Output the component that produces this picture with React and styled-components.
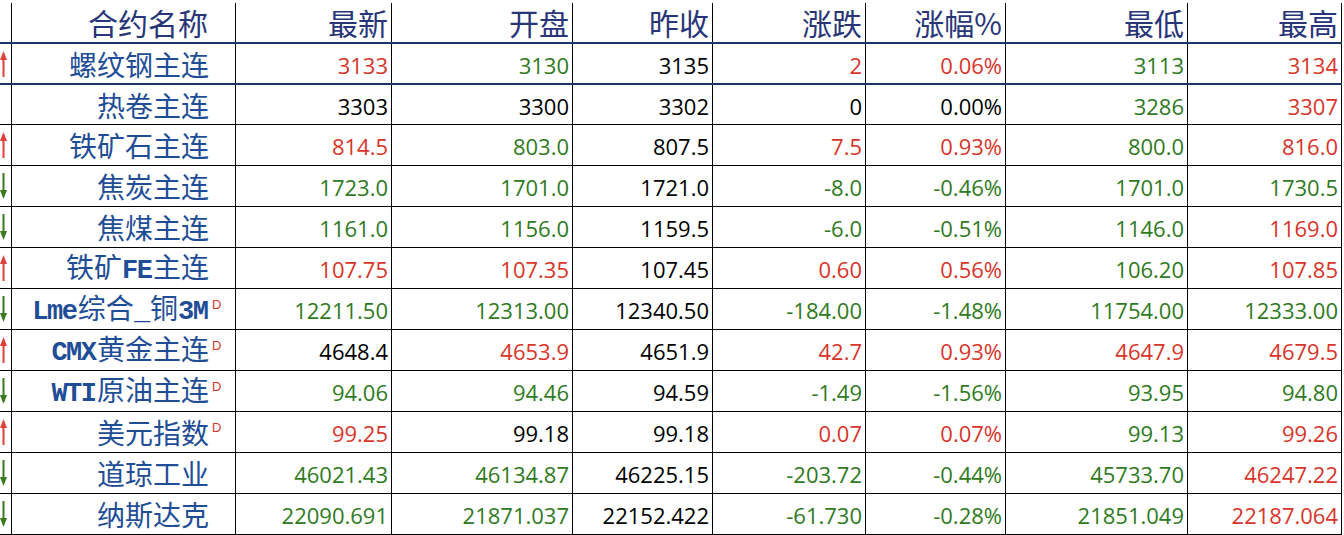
import styled, { createGlobalStyle } from "styled-components";

const RED = "#d8352a";
const GREEN = "#2f7a22";
const BLACK = "#000000";
const colors = { r: RED, g: GREEN, k: BLACK };

const headers = ["合约名称", "最新", "开盘", "昨收", "涨跌", "涨幅%", "最低", "最高"];

const rows = [
  { dir: "up", name: "螺纹钢主连", vals: ["3133", "3130", "3135", "2", "0.06%", "3113", "3134"], c: "rgkrrgr" },
  { dir: "", name: "热卷主连", vals: ["3303", "3300", "3302", "0", "0.00%", "3286", "3307"], c: "kkkkkgr" },
  { dir: "up", name: "铁矿石主连", vals: ["814.5", "803.0", "807.5", "7.5", "0.93%", "800.0", "816.0"], c: "rgkrrgr" },
  { dir: "down", name: "焦炭主连", vals: ["1723.0", "1701.0", "1721.0", "-8.0", "-0.46%", "1701.0", "1730.5"], c: "ggkgggg" },
  { dir: "down", name: "焦煤主连", vals: ["1161.0", "1156.0", "1159.5", "-6.0", "-0.51%", "1146.0", "1169.0"], c: "ggkgggr" },
  { dir: "up", name: "铁矿FE主连", vals: ["107.75", "107.35", "107.45", "0.60", "0.56%", "106.20", "107.85"], c: "rrkrrgr" },
  { dir: "down", name: "Lme综合_铜3M", d: true, vals: ["12211.50", "12313.00", "12340.50", "-184.00", "-1.48%", "11754.00", "12333.00"], c: "ggkgggg" },
  { dir: "up", name: "CMX黄金主连", d: true, vals: ["4648.4", "4653.9", "4651.9", "42.7", "0.93%", "4647.9", "4679.5"], c: "krkrrrr" },
  { dir: "down", name: "WTI原油主连", d: true, vals: ["94.06", "94.46", "94.59", "-1.49", "-1.56%", "93.95", "94.80"], c: "ggkgggg" },
  { dir: "up", name: "美元指数", d: true, vals: ["99.25", "99.18", "99.18", "0.07", "0.07%", "99.13", "99.26"], c: "rkkrrgr" },
  { dir: "down", name: "道琼工业", vals: ["46021.43", "46134.87", "46225.15", "-203.72", "-0.44%", "45733.70", "46247.22"], c: "ggkgggr" },
  { dir: "down", name: "纳斯达克", vals: ["22090.691", "21871.037", "22152.422", "-61.730", "-0.28%", "21851.049", "22187.064"], c: "ggkgggr" },
];

const Arrow = ({ dir }) => {
  if (!dir) return null;
  const color = dir === "up" ? "#e0403a" : "#3b7a1c";
  return (
    <ArrowSvg viewBox="0 0 7 26">
      {dir === "up" ? (
        <>
          <polygon points="3.5,0 7,9 0,9" fill={color} />
          <rect x="2.5" y="8" width="2" height="18" fill={color} />
        </>
      ) : (
        <>
          <rect x="2.5" y="0" width="2" height="18" fill={color} />
          <polygon points="3.5,26 7,17 0,17" fill={color} />
        </>
      )}
    </ArrowSvg>
  );
};

// split name into ascii / cjk runs so the latin bits get the mono face
const NameText = ({ text }) =>
  text.split(/([\x00-\x7F]+)/).filter(Boolean).map((part, i) =>
    /^[\x00-\x7F]+$/.test(part) ? <Latin key={i}>{part}</Latin> : <span key={i}>{part}</span>
  );

const App = () => {
  return (
    <>
      <GlobalStyle />
      <Sheet>
        <Row $h={44} $thick $head>
          <ArrowCell />
          {headers.map((h, i) => (
            <HeadCell key={h} $name={i === 0}>{h}</HeadCell>
          ))}
        </Row>
        {rows.map((r, idx) => (
          <Row key={r.name} $h={idx === 1 ? 40 : 41} $thick={idx === 0}>
            <ArrowCell>
              <Arrow dir={r.dir} />
            </ArrowCell>
            <NameCell>
              <Name>
                <NameText text={r.name} />
              </Name>
              <SupSlot>{r.d && <Sup>D</Sup>}</SupSlot>
            </NameCell>
            {r.vals.map((v, i) => (
              <NumCell key={i} $color={colors[r.c[i]]}>{v}</NumCell>
            ))}
          </Row>
        ))}
      </Sheet>
    </>
  );
};

export default App;

const GlobalStyle = createGlobalStyle`
  html, body {
    margin: 0;
    padding: 0;
    background: #ffffff;
  }
`;

const Sheet = styled.div`
  width: 1342px;
  display: flex;
  flex-direction: column;
`;

const Row = styled.div`
  display: grid;
  grid-template-columns: 12px 224px 156px 181px 140px 153px 140px 182px 154px;
  box-sizing: border-box;
  height: ${(props) => props.$h}px;
  padding-top: ${(props) => (props.$head ? "3px" : "0")};
  border-bottom: ${(props) => (props.$thick ? "2px solid #1b3766" : "1px solid #000")};
`;

const Cell = styled.div`
  box-sizing: border-box;
  border-right: 1px solid #000;
  display: flex;
  align-items: center;
  justify-content: flex-end;
  white-space: nowrap;
  line-height: 1.2;
`;

const ArrowCell = styled(Cell)`
  justify-content: flex-start;
`;

const ArrowSvg = styled.svg`
  width: 7px;
  height: 26px;
  display: block;
`;

const HeadCell = styled(Cell)`
  font-family: "Noto Sans CJK SC", sans-serif;
  font-size: 30px;
  color: #283578;
  padding-right: ${(props) => (props.$name ? "27px" : "3px")};
  padding-bottom: 2px;
`;

const NameCell = styled(Cell)`
  font-family: "Noto Sans CJK SC", sans-serif;
  font-size: 28px;
  color: #1f4e97;
`;

const Name = styled.span`
  display: flex;
  align-items: baseline;
  padding-top: 2px;
`;

const Latin = styled.span`
  font-family: "Liberation Mono", monospace;
  font-weight: bold;
  font-size: 27px;
  letter-spacing: -1.5px;
  margin-right: 1.5px;
`;

const SupSlot = styled.span`
  width: 26px;
  align-self: flex-start;
  padding-left: 3px;
  padding-top: 9px;
  box-sizing: border-box;
`;

const Sup = styled.span`
  font-family: "Liberation Sans", sans-serif;
  font-size: 13px;
  line-height: 13px;
  color: ${RED};
  display: block;
`;

const NumCell = styled(Cell)`
  font-family: "Open Sans", sans-serif;
  font-size: 22px;
  color: ${(props) => props.$color};
  padding-right: 3px;
  padding-top: 3px;
`;
